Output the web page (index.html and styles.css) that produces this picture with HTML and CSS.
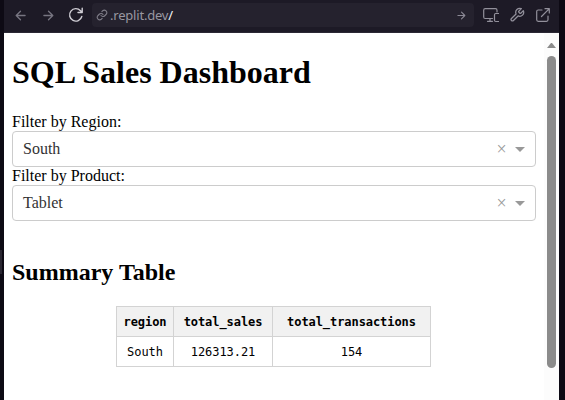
FILE: index.html
```html
<!DOCTYPE html>
<html lang="en">
<head>
<meta charset="utf-8">
<title>SQL Sales Dashboard</title>
<link rel="stylesheet" href="styles.css">
</head>
<body>
<div class="rail"><span class="handle"></span></div>
<div class="pane">
  <header class="toolbar">
    <svg class="nav back" viewBox="0 0 12 12"><path d="M11 6H1.5M6 1.3L1.3 6L6 10.7"/></svg>
    <svg class="nav forward" viewBox="0 0 12 12"><path d="M1 6h9.5M6 1.3L10.7 6L6 10.7"/></svg>
    <svg class="reload" viewBox="0 0 16 16"><path d="M13.8 9.5A6.2 6.2 0 1 1 12.5 3.8L14.2 5.5M14.2 1.3V5.5H10"/></svg>
    <div class="address">
      <svg class="link" viewBox="0 0 24 24"><path d="M10 13a5 5 0 0 0 7.5.5l3-3a5 5 0 0 0-7-7l-1.8 1.7M14 11a5 5 0 0 0-7.5-.5l-3 3a5 5 0 0 0 7 7l1.8-1.7"/></svg>
      <span class="url">.replit.dev<b>/</b></span>
      <svg class="go" viewBox="0 0 10 10"><path d="M1 5h7.5M5 1.3L8.7 5L5 8.7"/></svg>
    </div>
    <svg class="tool devices" viewBox="0 0 16 15"><path d="M9.5 10.5H2.2Q.7 10.5.7 9V2.2Q.7.7 2.2.7H12.5Q14 .7 14 2.2V4M4.5 13.3H9.5M7 10.5V13M15.5 5.5H12.7Q11.5 5.5 11.5 6.7V12.3Q11.5 13.5 12.7 13.5H15.5"/></svg>
    <svg class="tool wrench" viewBox="0 0 24 24"><path d="M14.7 6.3a1 1 0 0 0 0 1.4l1.6 1.6a1 1 0 0 0 1.4 0l3.8-3.8a6 6 0 0 1-7.9 7.9l-6.9 6.9a2.1 2.1 0 0 1-3-3l6.9-6.9a6 6 0 0 1 7.9-7.9z"/></svg>
    <svg class="tool external" viewBox="0 0 14 14"><path d="M6 2H2.2Q.7 2 .7 3.5V11.8Q.7 13.3 2.2 13.3H10.5Q12 13.3 12 11.8V8M9 .7H13.3V5M13.3.7L5.5 8.5"/></svg>
  </header>
  <div class="viewport">
    <main class="page">
      <h1>SQL Sales Dashboard</h1>
      <div class="label">Filter by Region:</div>
      <div class="select"><span class="value">South</span><span class="clear">×</span><span class="arrow"></span></div>
      <div class="label">Filter by Product:</div>
      <div class="select"><span class="value">Tablet</span><span class="clear">×</span><span class="arrow"></span></div>
      <h2>Summary Table</h2>
      <table>
        <colgroup><col class="region"><col class="sales"><col class="transactions"></colgroup>
        <thead><tr><th>region</th><th>total_sales</th><th>total_transactions</th></tr></thead>
        <tbody><tr><td>South</td><td>126313.21</td><td>154</td></tr></tbody>
      </table>
    </main>
    <div class="scrollbar"><span class="up"></span><span class="thumb"></span></div>
  </div>
</div>
</body>
</html>
```
FILE: styles.css
```css
* { box-sizing: border-box; }
body {
  margin: 0;
  width: 565px;
  height: 400px;
  overflow: hidden;
  display: flex;
  background: #0d0a14;
  font-family: "Liberation Serif", serif;
  font-size: 16px;
  color: #000;
}
.rail { width: 4px; padding-top: 250px; flex: none; }
.handle { display: block; width: 2px; height: 24px; background: #292631; }
.pane { width: 555px; display: flex; flex-direction: column; }
.toolbar {
  height: 33px;
  flex: none;
  display: flex;
  align-items: center;
  padding: 0 9px 2px 11px;
  background: #1d1a26;
  border-bottom: 1px solid #2b2834;
}
svg { flex: none; fill: none; stroke: #92909b; stroke-width: 1.2; stroke-linecap: round; stroke-linejoin: round; }
.nav { width: 11px; height: 11px; stroke: #777581; stroke-width: 1.4; }
.forward { margin-left: 17px; }
.reload { width: 16px; height: 16px; margin-left: 14px; stroke: #d0ced5; stroke-width: 1.4; }
.address {
  width: 383px;
  height: 24px;
  margin-left: 8px;
  border-radius: 4px;
  background: #25222e;
  display: flex;
  align-items: center;
  padding: 0 8px 0 4px;
}
.link { width: 12px; height: 12px; stroke: #7f7d88; stroke-width: 2.2; }
.url { margin: -1px 0 0 2px; font: 13px/18px "Noto Sans", sans-serif; color: #9997a1; letter-spacing: -.2px; }
.url b { font-weight: 400; color: #f5f5f7; }
.go { width: 9px; height: 9px; margin-left: auto; stroke: #8b8995; }
.devices { width: 16px; height: 15px; margin-left: 9px; }
.wrench { width: 16px; height: 16px; margin-left: 10px; stroke-width: 1.9; }
.external { width: 14px; height: 14px; margin-left: 11px; }
.viewport { flex: 1; display: flex; background: #fff; }
.page { width: 540px; padding: 21px 8px 0; }
h1 { margin: 0 0 22px; font-size: 32px; line-height: 37px; }
.label { height: 18px; line-height: 18px; }
.select {
  height: 36px;
  display: flex;
  align-items: center;
  padding: 0 10px;
  border: 1px solid #ccc;
  border-radius: 4px;
  color: #333;
}
.clear { width: 17px; margin: -1px 5px 0 auto; text-align: center; font-size: 18px; line-height: 18px; color: #999; }
.arrow { margin-top: 1px; border: 5px solid transparent; border-top-color: #999; border-bottom: 0; }
h2 { margin: 37px 0 20px; font-size: 24px; line-height: 28px; }
table {
  width: 315px;
  margin: 0 auto;
  table-layout: fixed;
  border-collapse: collapse;
  font: 12px/15px "DejaVu Sans Mono", monospace;
  letter-spacing: -.07px;
  position: relative;
  left: -1px;
}
.region { width: 57px; }
.sales { width: 99px; }
.transactions { width: 158px; }
th, td { height: 30px; padding: 2px 0 0 1px; border: 1px solid #d3d3d3; text-align: center; white-space: nowrap; }
th { background: #f1f1f1; }
.scrollbar { width: 15px; background: #fcfcfc; padding: 10px 0 0 3px; }
.up { display: block; width: 9px; border: 4.5px solid transparent; border-top: 0; border-bottom: 5px solid #8b8b8b; }
.thumb { display: block; width: 9px; height: 312px; margin-top: 8px; border-radius: 5px; background: #8b8b8b; }
```
